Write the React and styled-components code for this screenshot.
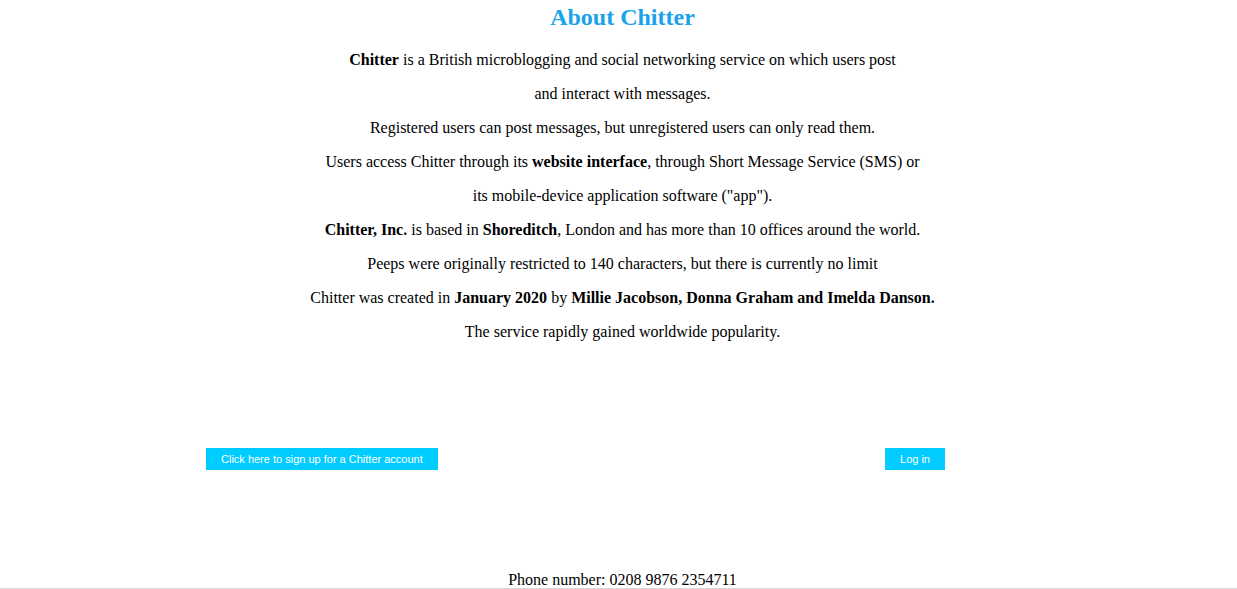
import React from "react";
import styled, { createGlobalStyle } from "styled-components";

const GlobalStyle = createGlobalStyle`
  html, body {
    margin: 0;
    padding: 0;
    background: #ffffff;
  }
  body {
    font-family: "Liberation Serif", "Times New Roman", serif;
    color: #000000;
    overflow: hidden;
  }
`;

const Page = styled.div`
  padding-left: 8px;
  display: flex;
  flex-direction: column;
`;

const Title = styled.h1`
  margin: 0;
  padding-top: 3px;
  font-size: 24px;
  line-height: 28px;
  font-weight: bold;
  color: #1aa3ea;
  text-align: center;
`;

const About = styled.div`
  margin-top: 20px;
  text-align: center;
`;

const Line = styled.p`
  margin: 0 0 16px;
  font-size: 16px;
  line-height: 18px;

  &:last-child {
    margin-bottom: 0;
  }
`;

const ButtonRow = styled.div`
  display: flex;
  justify-content: space-between;
  margin: 107px 0 0 198px;
  width: 739px;
`;

const Button = styled.button`
  height: 22px;
  padding: 0 15px;
  border: none;
  border-radius: 0;
  background: #00ccff;
  color: #ffffff;
  font-family: "Liberation Sans", Arial, sans-serif;
  font-size: 11px;
  line-height: 22px;
  cursor: pointer;
`;

const Footer = styled.footer`
  margin-top: 101px;
  margin-left: -8px;
  padding-left: 8px;
  font-size: 16px;
  line-height: 17px;
  text-align: center;
  border-bottom: 1px solid #dadada;
`;

export default function App() {
  return (
    <>
      <GlobalStyle />
      <Page>
        <Title>About Chitter</Title>
        <About>
          <Line>
            <b>Chitter</b> is a British microblogging and social networking service on which users post
          </Line>
          <Line>and interact with messages.</Line>
          <Line>Registered users can post messages, but unregistered users can only read them.</Line>
          <Line>
            Users access Chitter through its <b>website interface</b>, through Short Message Service (SMS) or
          </Line>
          <Line>its mobile-device application software ("app").</Line>
          <Line>
            <b>Chitter, Inc.</b> is based in <b>Shoreditch</b>, London and has more than 10 offices around the world.
          </Line>
          <Line>Peeps were originally restricted to 140 characters, but there is currently no limit</Line>
          <Line>
            Chitter was created in <b>January 2020</b> by <b>Millie Jacobson, Donna Graham and Imelda Danson.</b>
          </Line>
          <Line>The service rapidly gained worldwide popularity.</Line>
        </About>
        <ButtonRow>
          <Button>Click here to sign up for a Chitter account</Button>
          <Button>Log in</Button>
        </ButtonRow>
        <Footer>Phone number: 0208 9876 2354711</Footer>
      </Page>
    </>
  );
}
